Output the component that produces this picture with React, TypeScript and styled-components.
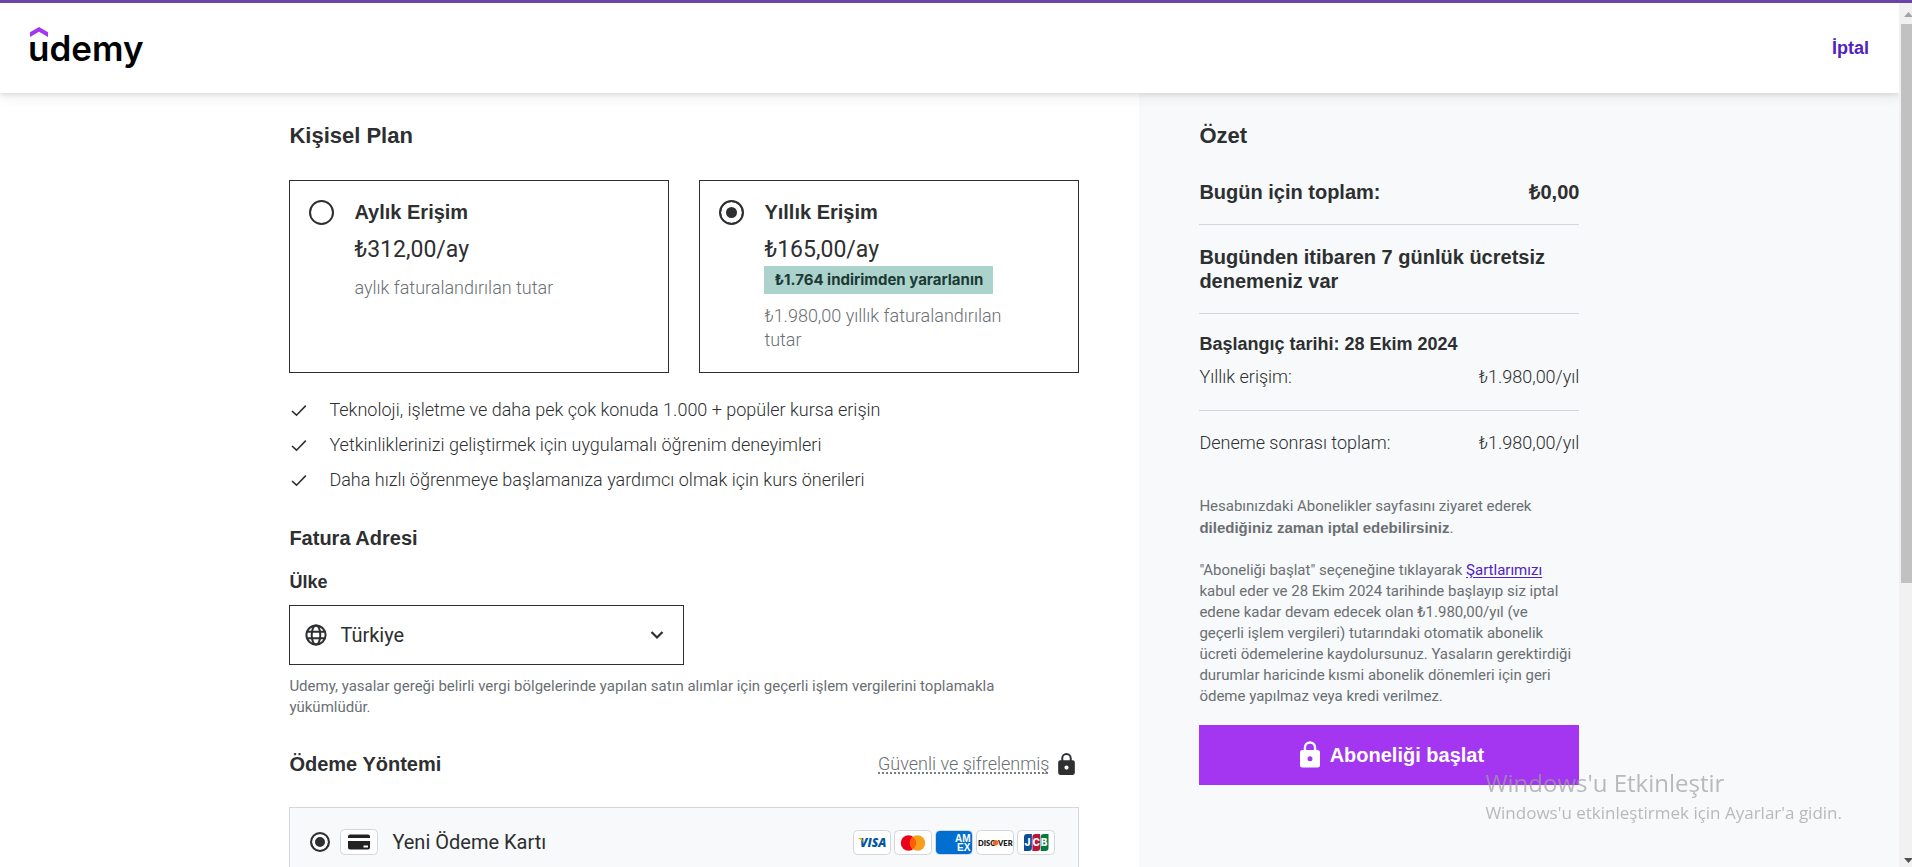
import React, { useState } from 'react';
import styled, { createGlobalStyle } from 'styled-components';

const ink = '#2d2f31';
const muted = '#6a6f73';
const line = '#d1d7dc';
const panel = '#f7f9fa';

const GlobalStyle = createGlobalStyle`
  *, *::before, *::after { box-sizing: border-box; }
  body { margin: 0; overflow: hidden; background: #fff; }
  h1, h2, p, ul { margin: 0; padding: 0; }
`;

const regular = `font-family: Roboto, "Liberation Sans", sans-serif; font-weight: 400;`;
const light = `font-family: Roboto, "Liberation Sans", sans-serif; font-weight: 350;`;
const bold = `font-family: "Liberation Sans", Arial, sans-serif; font-weight: 700;`;

const Window = styled.div`
  height: 100vh;
  display: flex;
  flex-direction: column;
  overflow: hidden;
  border-top: 3px solid #6c43a6;
  color: ${ink};
`;
const Viewport = styled.div`
  flex: 1;
  min-height: 0;
  display: flex;
`;
const Page = styled.div`
  flex: 1;
  min-width: 0;
  display: flex;
  flex-direction: column;
  overflow: hidden;
`;

const ScrollTrack = styled.div`
  flex: none;
  width: 13px;
  display: flex;
  flex-direction: column;
  padding-left: 2px;
  background: #f1f1f1;
  overflow: hidden;
`;
const ScrollArrow = styled.svg`
  flex: none;
  width: 15px;
  height: 21px;
`;
const ScrollRail = styled.div`
  flex: 1;
`;
const ScrollThumb = styled.div`
  height: 68%;
  background: #c1c1c1;
`;

const Header = styled.header`
  position: relative;
  z-index: 1;
  flex: none;
  height: 90px;
  display: flex;
  align-items: center;
  justify-content: space-between;
  padding: 0 30px 0 28px;
  background: #fff;
  box-shadow: 0 2px 4px rgba(0, 0, 0, 0.08), 0 4px 12px rgba(0, 0, 0, 0.08);
`;
const Logo = styled.a`
  position: relative;
  color: #000;
  font: 600 35px/42px Inter, "Liberation Sans", sans-serif;
  text-decoration: none;
`;
const LogoHat = styled.svg`
  position: absolute;
  left: 2px;
  top: 0;
  width: 18px;
  height: 10px;
`;
const CancelLink = styled.a`
  ${bold}
  font-size: 18px;
  line-height: 24px;
  color: #5022c3;
  text-decoration: none;
`;

const Columns = styled.div`
  flex: 1;
  min-height: 0;
  display: grid;
  grid-template-columns: 3fr 2fr;
`;
const Main = styled.main`
  display: flex;
  justify-content: flex-end;
  padding: 27px 60px 0;
`;
const MainInner = styled.div`
  width: 100%;
  max-width: 790px;
`;
const Aside = styled.aside`
  padding: 27px 60px 0;
  background: ${panel};
`;
const AsideInner = styled.div`
  max-width: 380px;
`;

const Title = styled.h1`
  ${bold}
  font-size: 22px;
  line-height: 32px;
  margin-bottom: 28px;
`;
const Heading = styled.h2`
  ${bold}
  font-size: 20px;
  line-height: 24px;
`;

const Plans = styled.div`
  display: grid;
  grid-template-columns: 1fr 1fr;
  gap: 30px;
`;
const PlanCard = styled.label`
  display: flex;
  align-items: flex-start;
  gap: 20px;
  padding: 19px 60px 20px 19px;
  border: 1px solid ${ink};
  cursor: pointer;
`;
const Radio = styled.input<{ $size: number; $ring: number }>`
  appearance: none;
  flex: none;
  width: ${(p) => p.$size}px;
  height: ${(p) => p.$size}px;
  margin: 0;
  border: 2px solid ${ink};
  border-radius: 50%;
  background: transparent;
  &:checked {
    background: ${ink};
    box-shadow: inset 0 0 0 ${(p) => p.$ring}px #fff;
  }
`;
const PlanBody = styled.div`
  display: flex;
  flex-direction: column;
  align-items: flex-start;
`;
const PlanName = styled.span`
  ${bold}
  font-size: 20px;
  line-height: 24px;
`;
const PlanPrice = styled.span`
  ${regular}
  margin-top: 12px;
  font-size: 23px;
  line-height: 28px;
`;
const Badge = styled.span`
  margin: 2px 0 -2px;
  padding: 0 10px;
  font: 700 15px/28px Inter, "Liberation Sans", sans-serif;
  color: #1b3a35;
  background: #acd2cc;
`;
const PlanNote = styled.span`
  ${light}
  margin-top: 12px;
  font-size: 18px;
  line-height: 24px;
  color: ${muted};
`;

const Benefits = styled.ul`
  display: flex;
  flex-direction: column;
  gap: 11px;
  margin: 25px 0 34px;
  list-style: none;
`;
const Benefit = styled.li`
  ${light}
  display: flex;
  align-items: center;
  gap: 20px;
  font-size: 18px;
  line-height: 24px;
`;

const FieldLabel = styled.label`
  ${bold}
  display: block;
  margin: 20px 0 11px;
  font-size: 18px;
  line-height: 24px;
`;
const SelectBox = styled.div`
  display: grid;
  align-items: center;
  width: 50%;
  > * { grid-area: 1 / 1; }
  > svg { pointer-events: none; }
`;
const CountrySelect = styled.select`
  ${regular}
  appearance: none;
  width: 100%;
  height: 60px;
  padding: 0 48px 0 50px;
  border: 1px solid ${ink};
  border-radius: 0;
  background: #fff;
  color: ${ink};
  font-size: 20px;
`;
const Globe = styled.svg`
  z-index: 1;
  margin-left: 16px;
`;
const Chevron = styled.svg`
  z-index: 1;
  justify-self: end;
  margin-right: 20px;
`;
const SmallText = styled.p`
  ${regular}
  font-size: 15px;
  line-height: 21px;
  color: ${muted};
`;
const Helper = styled(SmallText)`
  margin-top: 11px;
  padding-right: 60px;
`;

const PaymentHead = styled.div`
  display: flex;
  align-items: center;
  justify-content: space-between;
  margin: 34px 0 31px;
`;
const Secure = styled.span`
  ${light}
  display: flex;
  align-items: center;
  gap: 5px;
  height: 24px;
  font-size: 18px;
  line-height: 24px;
  color: ${muted};
  > svg { color: ${ink}; }
`;
const SecureText = styled.span`
  text-decoration: underline dotted;
  text-underline-offset: 3px;
  text-decoration-skip-ink: none;
`;
const PaymentPanel = styled.div`
  padding: 20px 23px 20px 20px;
  min-height: 120px;
  border: 1px solid ${line};
  background: ${panel};
`;
const PaymentRow = styled.div`
  display: flex;
  align-items: center;
  justify-content: space-between;
  height: 28px;
`;
const PaymentLabel = styled.label`
  ${regular}
  display: flex;
  align-items: center;
  gap: 10px;
  font-size: 20px;
  line-height: 28px;
`;
const PaymentName = styled.span`
  margin-left: 4px;
`;
const Brands = styled.div`
  display: flex;
  gap: 3px;
`;

const SumSection = styled.section`
  padding: 20px 0;
  border-bottom: 1px solid ${line};
  &:first-of-type { padding-top: 0; }
  &:last-of-type { border-bottom: 0; }
`;
const SumRow = styled.div`
  ${light}
  display: flex;
  justify-content: space-between;
  font-size: 18px;
  line-height: 24px;
`;
const TotalRow = styled(SumRow)`
  ${bold}
  font-size: 20px;
`;
const StartDate = styled.p`
  ${bold}
  margin-bottom: 10px;
  font-size: 18px;
  line-height: 20px;
  & + div { line-height: 26px; }
`;
const Terms = styled.div`
  display: flex;
  flex-direction: column;
  gap: 21px;
  margin: 21px 0 18px;
  padding-right: 6px;
`;
const Strong = styled.b`
  ${bold}
`;
const TermsLink = styled.a`
  color: #5022c3;
  text-decoration: underline;
  text-underline-offset: 2px;
`;
const StartButton = styled.button`
  ${bold}
  display: flex;
  align-items: center;
  justify-content: center;
  gap: 5px;
  width: 100%;
  height: 60px;
  padding: 0;
  border: 0;
  background: #a435f0;
  color: #fff;
  font-size: 20px;
  cursor: pointer;
`;

const Activation = styled.div`
  position: fixed;
  right: 70px;
  bottom: 41px;
  z-index: 2;
  font-family: "Open Sans", "Noto Sans", sans-serif;
  color: rgba(158, 158, 158, 0.7);
  pointer-events: none;
`;
const ActivationTitle = styled.p`
  font-size: 24px;
  line-height: 32px;
`;
const ActivationText = styled.p`
  font-size: 17px;
  line-height: 27px;
`;

const LockIcon = ({ size }: { size: number }) => (
  <svg width={size} height={size} viewBox="0 0 24 24" fill="currentColor" aria-hidden="true">
    <path
      fillRule="evenodd"
      d="M18 8h-1V6A5 5 0 0 0 7 6v2H6a2 2 0 0 0-2 2v10a2 2 0 0 0 2 2h12a2 2 0 0 0 2-2V10a2 2 0 0 0-2-2ZM12 17a2 2 0 1 1 0-4 2 2 0 0 1 0 4ZM8.900 8V6a3.100 3.100 0 0 1 6.200 0v2Z"
    />
  </svg>
);

const CheckIcon = () => (
  <svg width="20" height="20" viewBox="0 0 20 20" fill="none" stroke={ink} strokeWidth="1.6" aria-hidden="true">
    <path d="M3 11 7.500 15.200 16.800 5.600" />
  </svg>
);

const GlobeIcon = () => (
  <Globe width="22" height="22" viewBox="0 0 22 22" fill="none" stroke={ink} strokeWidth="2" aria-hidden="true">
    <circle cx="11" cy="11" r="9.600" />
    <ellipse cx="11" cy="11" rx="4.300" ry="9.600" />
    <path d="M2.200 7.800h17.600M2.200 14.200h17.600" />
  </Globe>
);

const CreditCardIcon = () => (
  <svg width="38" height="26" viewBox="0 0 38 26" aria-hidden="true">
    <rect x=".5" y=".5" width="37" height="25" rx="4" fill="#fff" stroke={line} />
    <path fill="#222" d="M10 5.500h18a2 2 0 0 1 2 2V9H8V7.500a2 2 0 0 1 2-2ZM8 12h22v6.500a2 2 0 0 1-2 2H10a2 2 0 0 1-2-2Z" />
    <path fill="#fff" d="M23.500 16.500h4.500v2h-4.500z" />
  </svg>
);

const Brand = ({ name, children }: { name: string; children: React.ReactNode }) => (
  <svg width="38" height="25" viewBox="0 0 38 25" role="img" aria-label={name}>
    <rect x=".5" y=".5" width="37" height="24" rx="4" fill="#fff" stroke={line} />
    {children}
  </svg>
);

const BrandList = () => (
  <Brands>
    <Brand name="Visa">
      <text x="7" y="17" fill="#01579f" fontFamily="Open Sans" fontSize="12" fontWeight="800" fontStyle="italic">VISA</text>
      <path d="M4.500 8h4.200l1.600 5.200C9 10.600 7 9 4.500 8Z" fill="#faa61a" />
    </Brand>
    <Brand name="Mastercard">
      <circle cx="14.500" cy="13" r="7.700" fill="#eb001b" />
      <circle cx="23.500" cy="13" r="7.700" fill="#f79e1b" />
      <path d="M19 6.800a7.700 7.700 0 0 1 0 12.400 7.700 7.700 0 0 1 0-12.400Z" fill="#ff5f00" />
    </Brand>
    <Brand name="American Express">
      <rect x="1" y="1" width="36" height="23" rx="4" fill="#016fd0" />
      <g fill="#fff" fontFamily="Liberation Sans" fontSize="10" fontWeight="700">
        <text x="20" y="12">AM</text>
        <text x="22" y="20.500">EX</text>
      </g>
    </Brand>
    <Brand name="Discover">
      <g fill="#1a1a1a" fontFamily="Lato" fontSize="7.500" fontWeight="800">
        <text x="2" y="15.500">DISC</text>
        <text x="22" y="15.500">VER</text>
      </g>
      <circle cx="19.500" cy="12.800" r="2.700" fill="#f26522" />
    </Brand>
    <Brand name="JCB">
      <path d="M10 4h4.900v14a3 3 0 0 1-3 3H7V7a3 3 0 0 1 3-3Z" fill="#0e4c96" />
      <path d="M18.400 4h4.800v14a3 3 0 0 1-3 3h-4.800V7a3 3 0 0 1 3-3Z" fill="#b8163a" />
      <path d="M26.700 4h4.800v14a3 3 0 0 1-3 3h-4.800V7a3 3 0 0 1 3-3Z" fill="#007b40" />
      <g fill="#fff" fontFamily="Inter" fontSize="10" fontWeight="800">
        <text x="7.500" y="16.200">J</text>
        <text x="15.500" y="16.200">C</text>
        <text x="23.800" y="16.200">B</text>
      </g>
    </Brand>
  </Brands>
);

interface Plan {
  id: string;
  name: string;
  price: string;
  badge?: string;
  note: string;
}
const plans: Plan[] = [
  { id: 'monthly', name: 'Aylık Erişim', price: '₺312,00/ay', note: 'aylık faturalandırılan tutar' },
  {
    id: 'yearly',
    name: 'Yıllık Erişim',
    price: '₺165,00/ay',
    badge: '₺1.764 indirimden yararlanın',
    note: '₺1.980,00 yıllık faturalandırılan tutar',
  },
];
const benefits = [
  'Teknoloji, işletme ve daha pek çok konuda 1.000 + popüler kursa erişin',
  'Yetkinliklerinizi geliştirmek için uygulamalı öğrenim deneyimleri',
  'Daha hızlı öğrenmeye başlamanıza yardımcı olmak için kurs önerileri',
];

export default function App() {
  const [plan, setPlan] = useState('yearly');
  return (
    <Window>
      <GlobalStyle />
      <Viewport>
        <Page>
          <Header>
            <Logo href="#">
              <LogoHat viewBox="0 0 18 10" aria-hidden="true">
                <path d="M0 5.200 9 0l9 5.200V10L9 4.800 0 10Z" fill="#a435f0" />
              </LogoHat>
              udemy
            </Logo>
            <CancelLink href="#">İptal</CancelLink>
          </Header>
          <Columns>
            <Main>
              <MainInner>
                <Title>Kişisel Plan</Title>
                <Plans>
                  {plans.map((p) => (
                    <PlanCard key={p.id}>
                      <Radio
                        type="radio"
                        name="plan"
                        $size={25}
                        $ring={5}
                        checked={plan === p.id}
                        onChange={() => setPlan(p.id)}
                      />
                      <PlanBody>
                        <PlanName>{p.name}</PlanName>
                        <PlanPrice>{p.price}</PlanPrice>
                        {p.badge && <Badge>{p.badge}</Badge>}
                        <PlanNote>{p.note}</PlanNote>
                      </PlanBody>
                    </PlanCard>
                  ))}
                </Plans>
                <Benefits>
                  {benefits.map((b) => (
                    <Benefit key={b}>
                      <CheckIcon />
                      {b}
                    </Benefit>
                  ))}
                </Benefits>
                <Heading>Fatura Adresi</Heading>
                <FieldLabel htmlFor="country">Ülke</FieldLabel>
                <SelectBox>
                  <CountrySelect id="country" defaultValue="TR">
                    <option value="TR">Türkiye</option>
                  </CountrySelect>
                  <GlobeIcon />
                  <Chevron width="14" height="10" viewBox="0 0 14 10" fill="none" stroke={ink} strokeWidth="2.200" aria-hidden="true">
                    <path d="m1.500 2 5.500 5.500L12.500 2" />
                  </Chevron>
                </SelectBox>
                <Helper>
                  Udemy, yasalar gereği belirli vergi bölgelerinde yapılan satın alımlar için geçerli işlem vergilerini
                  toplamakla yükümlüdür.
                </Helper>
                <PaymentHead>
                  <Heading>Ödeme Yöntemi</Heading>
                  <Secure>
                    <SecureText>Güvenli ve şifrelenmiş</SecureText>
                    <LockIcon size={25} />
                  </Secure>
                </PaymentHead>
                <PaymentPanel>
                  <PaymentRow>
                    <PaymentLabel>
                      <Radio type="radio" name="payment" $size={20} $ring={3} defaultChecked />
                      <CreditCardIcon />
                      <PaymentName>Yeni Ödeme Kartı</PaymentName>
                    </PaymentLabel>
                    <BrandList />
                  </PaymentRow>
                </PaymentPanel>
              </MainInner>
            </Main>
            <Aside>
              <AsideInner>
                <Title as="h2">Özet</Title>
                <SumSection>
                  <TotalRow>
                    <span>Bugün için toplam:</span>
                    <span>₺0,00</span>
                  </TotalRow>
                </SumSection>
                <SumSection>
                  <Heading>Bugünden itibaren 7 günlük ücretsiz denemeniz var</Heading>
                </SumSection>
                <SumSection>
                  <StartDate>Başlangıç tarihi: 28 Ekim 2024</StartDate>
                  <SumRow>
                    <span>Yıllık erişim:</span>
                    <span>₺1.980,00/yıl</span>
                  </SumRow>
                </SumSection>
                <SumSection>
                  <SumRow>
                    <span>Deneme sonrası toplam:</span>
                    <span>₺1.980,00/yıl</span>
                  </SumRow>
                </SumSection>
                <Terms>
                  <SmallText>
                    Hesabınızdaki Abonelikler sayfasını ziyaret ederek <Strong>dilediğiniz zaman iptal edebilirsiniz</Strong>.
                  </SmallText>
                  <SmallText>
                    "Aboneliği başlat" seçeneğine tıklayarak <TermsLink href="#">Şartlarımızı</TermsLink> kabul eder ve 28
                    Ekim 2024 tarihinde başlayıp siz iptal edene kadar devam edecek olan ₺1.980,00/yıl (ve geçerli işlem
                    vergileri) tutarındaki otomatik abonelik ücreti ödemelerine kaydolursunuz. Yasaların gerektirdiği
                    durumlar haricinde kısmi abonelik dönemleri için geri ödeme yapılmaz veya kredi verilmez.
                  </SmallText>
                </Terms>
                <StartButton type="button">
                  <LockIcon size={30} />
                  Aboneliği başlat
                </StartButton>
              </AsideInner>
            </Aside>
          </Columns>
        </Page>
        <ScrollTrack aria-hidden="true">
          <ScrollArrow viewBox="0 0 15 21">
            <path d="M3 14 7.500 9l4.500 5Z" fill="#a3a3a3" />
          </ScrollArrow>
          <ScrollRail>
            <ScrollThumb />
          </ScrollRail>
          <ScrollArrow viewBox="0 0 15 21">
            <path d="m3 12 4.500 5 4.500-5Z" fill="#505050" />
          </ScrollArrow>
        </ScrollTrack>
      </Viewport>
      <Activation>
        <ActivationTitle>Windows'u Etkinleştir</ActivationTitle>
        <ActivationText>Windows'u etkinleştirmek için Ayarlar'a gidin.</ActivationText>
      </Activation>
    </Window>
  );
}
